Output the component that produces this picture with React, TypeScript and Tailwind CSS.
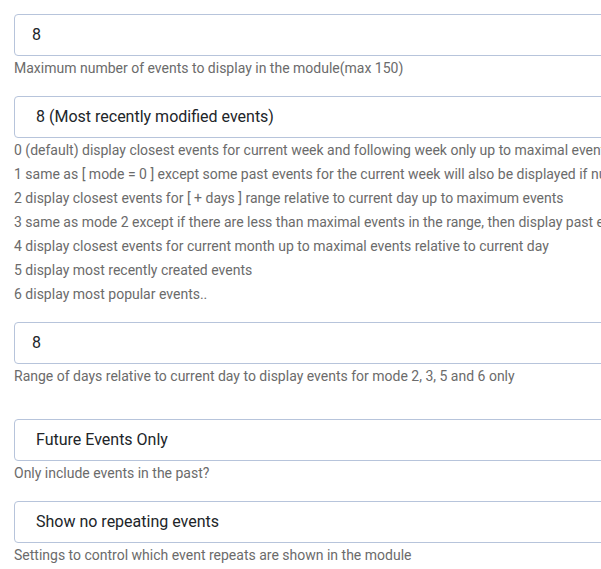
const modes = [
  '0 (default) display closest events for current week and following week only up to maximal events relative to current day',
  '1 same as [ mode = 0 ] except some past events for the current week will also be displayed if num of future events is less than maximal events',
  '2 display closest events for [ + days ] range relative to current day up to maximum events',
  '3 same as mode 2 except if there are less than maximal events in the range, then display past events within this range',
  '4 display closest events for current month up to maximal events relative to current day',
  '5 display most recently created events',
  '6 display most popular events..',
]

function Field({ value, select }: { value: string; select?: boolean }) {
  return (
    <div
      className={`h-[42px] w-[800px] rounded border border-[#b7c4db] bg-white flex items-center text-[16px] text-[#212529] ${
        select ? 'pl-[21px]' : 'pl-[17px]'
      }`}
    >
      {value}
    </div>
  )
}

function Help({ children }: { children: React.ReactNode }) {
  return <div className="text-[14px] leading-[24px] text-[#6b6b6b] whitespace-nowrap">{children}</div>
}

export default function App() {
  return (
    <div className="w-[601px] h-[569px] overflow-hidden bg-white" style={{ fontFamily: 'Roboto, sans-serif' }}>
      <div className="pt-[14px] pl-[14px] flex flex-col">
        <Field value="8" />
        <Help>Maximum number of events to display in the module(max 150)</Help>

        <div className="mt-[16px]">
          <Field value="8 (Most recently modified events)" select />
        </div>
        <div>
          {modes.map((m) => (
            <Help key={m}>{m}</Help>
          ))}
        </div>

        <div className="mt-[16px]">
          <Field value="8" />
        </div>
        <Help>Range of days relative to current day to display events for mode 2, 3, 5 and 6 only</Help>

        <div className="mt-[31px]">
          <Field value="Future Events Only" select />
        </div>
        <Help>Only include events in the past?</Help>

        <div className="mt-[16px]">
          <Field value="Show no repeating events" select />
        </div>
        <Help>Settings to control which event repeats are shown in the module</Help>
      </div>
    </div>
  )
}
